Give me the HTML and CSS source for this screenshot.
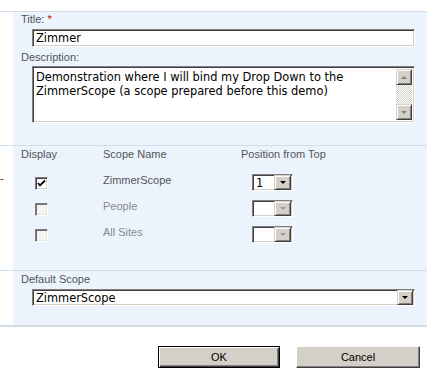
FILE: index.html
```html
<!DOCTYPE html>
<html>
<head>
<meta charset="utf-8">
<title>Search Box Settings</title>
<link rel="stylesheet" href="styles.css">
</head>
<body>
<div class="form">
  <div class="sec sec1">
    <div class="gutter"></div>
    <div class="panel">
      <div class="label">Title: <span class="req">*</span></div>
      <div class="field text">Zimmer</div>
      <div class="label lbl-desc">Description:</div>
      <div class="field area">
        <div class="area-text">Demonstration where I will bind my Drop Down to the<br>ZimmerScope (a scope prepared before this demo)</div>
        <div class="vscroll">
          <div class="sbtn"><span class="tri up"></span></div>
          <div class="track"></div>
          <div class="sbtn"><span class="tri"></span></div>
        </div>
      </div>
    </div>
  </div>
  <div class="sec sec2">
    <div class="gutter"><span class="frag">-</span></div>
    <div class="panel">
      <div class="grid">
        <div class="hdr">Display</div>
        <div class="hdr">Scope Name</div>
        <div class="hdr">Position from Top</div>

        <div class="cell"><span class="chk on"><svg width="9" height="9" viewBox="0 0 9 9"><path d="M1 4 L3 6.5 L8 1.5" fill="none" stroke="#000" stroke-width="1.8"/></svg></span></div>
        <div class="cell name">ZimmerScope</div>
        <div class="cell"><div class="sel small"><span class="val">1</span><span class="dbtn"><span class="tri"></span></span></div></div>

        <div class="cell"><span class="chk off"></span></div>
        <div class="cell name dim">People</div>
        <div class="cell"><div class="sel small dis"><span class="val"></span><span class="dbtn"><span class="tri"></span></span></div></div>

        <div class="cell"><span class="chk off"></span></div>
        <div class="cell name dim">All Sites</div>
        <div class="cell"><div class="sel small dis"><span class="val"></span><span class="dbtn"><span class="tri"></span></span></div></div>
      </div>
    </div>
  </div>
  <div class="sec sec3">
    <div class="gutter"></div>
    <div class="panel">
      <div class="label">Default Scope</div>
      <div class="sel wide"><span class="val">ZimmerScope</span><span class="dbtn"><span class="tri"></span></span></div>
    </div>
  </div>
</div>
<div class="buttons">
  <div class="btn default"><span>OK</span></div>
  <div class="btn"><span>Cancel</span></div>
</div>
</body>
</html>
```

FILE: styles.css
```css
html, body {
  margin: 0;
  padding: 0;
  background: #ffffff;
}
body {
  font-family: "Liberation Sans", Arial, sans-serif;
  font-size: 11px;
  color: #555555;
  width: 445px;
  height: 381px;
  overflow: hidden;
}
.form {
  width: 427px;
  margin-top: 11px;
  border-bottom: 2px solid #d6dbe2;
}
.sec {
  display: flex;
  border-top: 1px solid #d3dce8;
}
.gutter {
  width: 13px;
  flex: none;
  position: relative;
}
.frag {
  position: absolute;
  left: 0;
  top: 26px;
  color: #333;
  font-size: 11px;
  line-height: 13px;
}
.panel {
  flex: 1;
  background: #ebf3fd;
  padding: 0 12px 0 8px;
}
.label {
  line-height: 13px;
  height: 13px;
}
.sec1 .panel { padding-top: 1px; padding-bottom: 22px; }
.req { color: #cc0000; }
.lbl-desc { margin-top: 4px; }

.field {
  box-sizing: border-box;
  margin-left: 11px;
  width: 383px;
  background: #fff;
  border-top: 1px solid #808080;
  border-left: 1px solid #808080;
  border-bottom: 1px solid #ffffff;
  border-right: 1px solid #ffffff;
  box-shadow: inset 1px 1px 0 #404040, inset -1px -1px 0 #d4d0c8;
  font-family: "DejaVu Sans", Verdana, sans-serif;
  font-size: 11.4px;
  color: #000;
}
.text {
  margin-top: 3px;
  height: 18px;
  line-height: 17px;
  padding-left: 3px;
}
.area {
  margin-top: 2px;
  height: 57px;
  display: flex;
  padding: 2px 2px 2px 2px;
}
.area-text {
  flex: 1;
  line-height: 14px;
  padding-left: 1px;
  padding-top: 1px;
}
.vscroll {
  width: 16px;
  display: flex;
  flex-direction: column;
}
.track {
  flex: 1;
  background: repeating-conic-gradient(#ffffff 0 25%, #d4d0c8 0 50%) 0 0 / 2px 2px;
}
.sbtn, .dbtn {
  box-sizing: border-box;
  width: 16px;
  height: 16px;
  background: #d4d0c8;
  border-top: 1px solid #d4d0c8;
  border-left: 1px solid #d4d0c8;
  border-right: 1px solid #404040;
  border-bottom: 1px solid #404040;
  box-shadow: inset 1px 1px 0 #ffffff, inset -1px -1px 0 #808080;
  display: flex;
  align-items: center;
  justify-content: center;
  flex: none;
}
.tri {
  width: 0;
  height: 0;
  border-left: 3px solid transparent;
  border-right: 3px solid transparent;
  border-top: 3px solid #000;
}
.tri.up {
  border-top: none;
  border-bottom: 3px solid #808080;
}
.vscroll .tri { border-top-color: #808080; }

.sec2 .panel { padding-top: 2px; padding-bottom: 25px; }
.grid {
  display: grid;
  grid-template-columns: 82px 138px 1fr;
  grid-template-rows: 19px;
  grid-auto-rows: 26px;
}
.hdr {
  line-height: 13px;
  height: 19px;
}
.cell { height: 26px; box-sizing: border-box; }
.name { padding-top: 7px; line-height: 13px; color: #555555; }
.name.dim { color: #8a8a8a; }

.chk {
  box-sizing: border-box;
  display: flex;
  align-items: center;
  justify-content: center;
  width: 13px;
  height: 13px;
  margin-top: 10px;
  margin-left: 14px;
  background: #fff;
  border-top: 1px solid #808080;
  border-left: 1px solid #808080;
  border-bottom: 1px solid #ffffff;
  border-right: 1px solid #ffffff;
  box-shadow: inset 1px 1px 0 #404040, inset -1px -1px 0 #d4d0c8;
}
.chk.off {
  background: #f4f4f4;
  box-shadow: inset 1px 1px 0 #6a6a6a, inset -1px -1px 0 #e4e4e4;
}
.chk svg { display: block; }

.sel {
  box-sizing: border-box;
  display: flex;
  align-items: center;
  background: #fff;
  border-top: 1px solid #808080;
  border-left: 1px solid #808080;
  border-bottom: 1px solid #ffffff;
  border-right: 1px solid #ffffff;
  box-shadow: inset 1px 1px 0 #404040, inset -1px -1px 0 #d4d0c8;
  padding: 1px 1px 1px 2px;
  font-family: "DejaVu Sans", Verdana, sans-serif;
  font-size: 11.4px;
  color: #000;
}
.sel .val { flex: 1; padding-left: 1px; line-height: 14px; }
.sel .dbtn { width: 16px; height: 15px; }
.small {
  width: 41px;
  height: 17px;
  margin-top: 7px;
  margin-left: 11px;
}
.small .dbtn { width: 17px; }
.dis .tri { border-top-color: #9a9a9a; }
.wide {
  width: 383px;
  height: 17px;
  margin-left: 11px;
  margin-top: 3px;
}

.sec3 .panel { padding-top: 2px; padding-bottom: 19px; }

.buttons {
  display: flex;
  justify-content: flex-end;
  gap: 16px;
  width: 420px;
  margin-top: 19px;
}
.btn {
  box-sizing: border-box;
  width: 124px;
  height: 22px;
  background: #d4d0c8;
  border-top: 1px solid #ffffff;
  border-left: 1px solid #ffffff;
  border-right: 1px solid #404040;
  border-bottom: 1px solid #404040;
  box-shadow: inset -1px -1px 0 #808080;
  display: flex;
  align-items: center;
  justify-content: center;
  color: #000;
  font-size: 11px;
}
.btn.default {
  width: 122px;
  border: 1px solid #000;
  box-shadow: inset 1px 1px 0 #ffffff, inset -1px -1px 0 #404040, inset -2px -2px 0 #808080;
}
```
